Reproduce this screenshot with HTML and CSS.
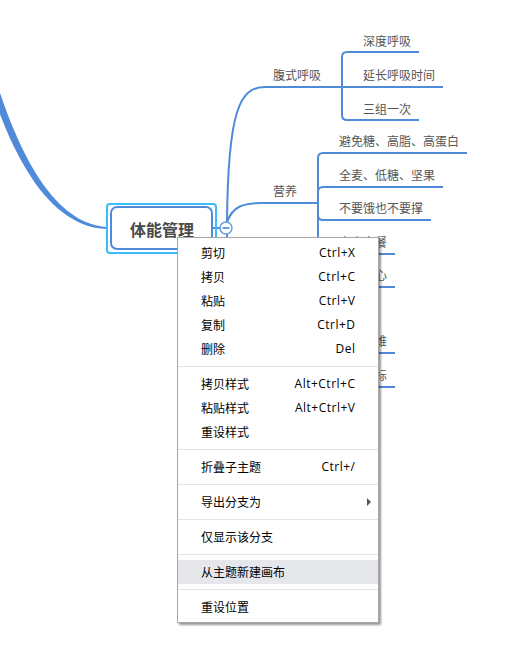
FILE: index.html
```html
<!DOCTYPE html>
<html lang="zh-CN">
<head>
<meta charset="utf-8">
<title>体能管理</title>
<link rel="stylesheet" href="styles.css">
</head>
<body>
<div class="canvas">
  <svg class="map" width="520" height="665" viewBox="0 0 520 665" xmlns="http://www.w3.org/2000/svg">
    <path class="trunk" d="M -8,92 C 19,172 56,228 108,229 L 108,227 C 60,225 25,168 -1,90 Z"/>
    <g class="ln">
      <path d="M 227,222 C 228,110 240,87 265,87 L 443,87"/>
      <path d="M 342,87 L 342,57 Q 342,52 347,52 L 419,52"/>
      <path d="M 342,87 L 342,115 Q 342,120 347,120 L 419,120"/>
      <path d="M 227,222 C 233,206 243,203 263,203 L 318,203"/>
      <path d="M 318,203 L 318,158 Q 318,153 323,153 L 467,153"/>
      <path d="M 318,203 L 318,192 Q 318,187 323,187 L 443,187"/>
      <path d="M 318,203 L 318,215 Q 318,220 323,220 L 431,220"/>
      <path d="M 318,203 L 318,249 Q 318,254 323,254 L 395,254"/>
      <path d="M 318,203 L 318,282 Q 318,287 323,287 L 395,287"/>
      <path d="M 318,203 L 318,315 Q 318,320 323,320 L 371,320"/>
      <path d="M 318,203 L 318,348 Q 318,353 323,353 L 395,353"/>
      <path d="M 318,203 L 318,382 Q 318,387 323,387 L 395,387"/>
      <path d="M 227,234 L 227,250"/>
      <path d="M 212,228 L 221,228"/>
    </g>
    <text class="lbl" x="273" y="74">腹式呼吸</text>
    <text class="lbl" x="363" y="40">深度呼吸</text>
    <text class="lbl" x="363" y="74">延长呼吸时间</text>
    <text class="lbl" x="363" y="108">三组一次</text>
    <text class="lbl" x="273" y="190">营养</text>
    <text class="lbl" x="339" y="140">避免糖、高脂、高蛋白</text>
    <text class="lbl" x="339" y="174">全麦、低糖、坚果</text>
    <text class="lbl" x="339" y="207">不要饿也不要撑</text>
    <text class="lbl" x="339" y="241">少食多餐</text>
    <text class="lbl" x="339" y="274">放松身心</text>
    <text class="lbl" x="339" y="307">运动</text>
    <text class="lbl" x="339" y="340">补充纤维</text>
    <text class="lbl" x="339" y="374">控制指标</text>
    <rect class="sel" x="107" y="204" width="109" height="49" rx="3"/>
    <rect class="node" x="111" y="207" width="101" height="42" rx="6"/>
    <text class="root" x="162" y="229">体能管理</text>
    <circle class="fold" cx="226" cy="228" r="6"/>
    <path class="fold-minus" d="M 222.5,228 L 229.5,228"/>
  </svg>

  <div class="menu">
    <div class="item"><span>剪切</span><span class="key">Ctrl+X</span></div>
    <div class="item"><span>拷贝</span><span class="key">Ctrl+C</span></div>
    <div class="item"><span>粘贴</span><span class="key">Ctrl+V</span></div>
    <div class="item"><span>复制</span><span class="key">Ctrl+D</span></div>
    <div class="item"><span>删除</span><span class="key">Del</span></div>
    <div class="sep"></div>
    <div class="item"><span>拷贝样式</span><span class="key">Alt+Ctrl+C</span></div>
    <div class="item"><span>粘贴样式</span><span class="key">Alt+Ctrl+V</span></div>
    <div class="item"><span>重设样式</span></div>
    <div class="sep"></div>
    <div class="item"><span>折叠子主题</span><span class="key">Ctrl+/</span></div>
    <div class="sep"></div>
    <div class="item item-sub"><span>导出分支为</span><span class="arrow"></span></div>
    <div class="sep"></div>
    <div class="item"><span>仅显示该分支</span></div>
    <div class="sep"></div>
    <div class="item item-hover"><span>从主题新建画布</span></div>
    <div class="sep"></div>
    <div class="item"><span>重设位置</span></div>
  </div>
</div>
</body>
</html>
```

FILE: styles.css
```css
html, body {
  margin: 0;
  padding: 0;
  background: #ffffff;
}

.canvas {
  position: relative;
  width: 520px;
  height: 665px;
  overflow: hidden;
  font-family: "Noto Sans CJK SC", "Noto Sans", sans-serif;
}

.map {
  display: block;
}

.trunk {
  fill: #4f8bd9;
}

.ln path {
  fill: none;
  stroke: #4f8bd9;
  stroke-width: 2;
}

.lbl {
  font-family: "Noto Sans CJK SC", sans-serif;
  font-size: 12px;
  fill: #555555;
  dominant-baseline: central;
}

.sel {
  fill: none;
  stroke: #38bdf8;
  stroke-width: 2;
}

.node {
  fill: #ffffff;
  stroke: #4f8bd9;
  stroke-width: 2;
}

.root {
  font-family: "Noto Sans CJK SC", sans-serif;
  font-size: 16px;
  font-weight: bold;
  fill: #4a4a4a;
  text-anchor: middle;
  dominant-baseline: central;
}

.fold {
  fill: #ffffff;
  stroke: #6a9fe0;
  stroke-width: 1.5;
}

.fold-minus {
  stroke: #6a9fe0;
  stroke-width: 2;
}

.menu {
  position: absolute;
  left: 177px;
  top: 237px;
  width: 202px;
  box-sizing: border-box;
  padding: 3px 0;
  background: #ffffff;
  border: 1px solid #a6a6a6;
  box-shadow: 2px 2px 2px rgba(0, 0, 0, 0.4);
  display: flex;
  flex-direction: column;
  font-size: 12px;
  color: #000000;
}

.item {
  height: 24px;
  padding: 0 23px;
  display: flex;
  align-items: center;
  justify-content: space-between;
  line-height: 24px;
}

.item-sub {
  padding-right: 7px;
}

.item-hover {
  background: #e6e7eb;
}

.key {
  font-family: "Open Sans", "Noto Sans", sans-serif;
  letter-spacing: 0.5px;
  margin-right: -0.5px;
}

.arrow {
  width: 0;
  height: 0;
  border-top: 4px solid transparent;
  border-bottom: 4px solid transparent;
  border-left: 4px solid #555555;
}

.sep {
  height: 11px;
  display: flex;
  align-items: center;
}

.sep::before {
  content: "";
  display: block;
  width: 100%;
  height: 1px;
  background: #e4e4e4;
}
```
